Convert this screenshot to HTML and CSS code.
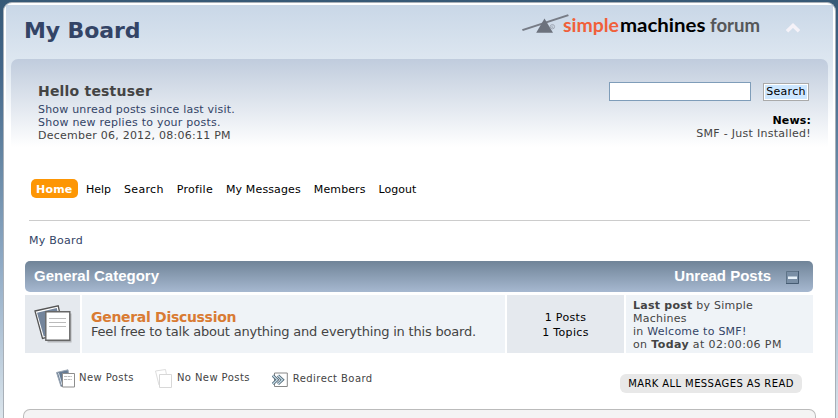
FILE: index.html
```html
<!DOCTYPE html>
<html lang="en">
<head>
<meta charset="utf-8">
<title>My Board</title>
<link rel="stylesheet" href="styles.css">
</head>
<body>
<div class="wrapper">
  <header class="top">
    <h1>My Board</h1>
    <svg class="logo" width="240" height="30" viewBox="522 10 240 30">
      <path d="M523 29.3 569 14.2l.8 1.8-46 15z" fill="#777c86"/>
      <path d="M545.5 18.5 554 32.8h-16.8z" fill="#6c727d"/>
      <circle cx="553.4" cy="26.7" r="2.2" fill="none" stroke="#98a0ac" stroke-width=".8"/>
      <path d="M554.3 26h-1.5v1.5h1.5" fill="none" stroke="#98a0ac" stroke-width=".6"/>
      <g class="logo-text">
        <text x="564" y="32" textLength="56" lengthAdjust="spacingAndGlyphs" fill="#f0603a">simple</text>
        <text x="621" y="32" textLength="85.5" lengthAdjust="spacingAndGlyphs" fill="#000">machines</text>
        <text x="711" y="32" textLength="50" lengthAdjust="spacingAndGlyphs" fill="#555759">forum</text>
      </g>
    </svg>
    <svg class="collapse" width="16" height="12" viewBox="0 0 16 12"><path d="M2 9.2 8 3.5l6 5.7" fill="none" stroke="#f5f2f8" stroke-width="3.6"/></svg>
  </header>
  <section class="upper">
    <div class="user">
      <h2>Hello testuser</h2>
      <a class="unread">Show unread posts since last visit.</a>
      <a class="replies">Show new replies to your posts.</a>
      <span class="date">December 06, 2012, 08:06:11 PM</span>
    </div>
    <div class="side">
      <div class="search"><input type="text" aria-label="Search"><button>Search</button></div>
      <b class="news">News:</b>
      <span class="newsline">SMF - Just Installed!</span>
    </div>
  </section>
  <nav>
    <a class="active">Home</a><a class="help">Help</a><a class="find">Search</a><a class="profile">Profile</a><a class="messages">My Messages</a><a class="members">Members</a><a>Logout</a>
  </nav>
  <div class="crumb">My Board</div>
  <main>
    <div class="cat"><h3>General Category</h3><h3 class="right">Unread Posts</h3>
      <svg width="13" height="13" viewBox="0 0 13 13"><path d="M0 0h13v13H0z" fill="#7a8fa6"/><path d="M.5 13V.5H13" fill="none" stroke="#5f7488"/><path d="M12.5 0v12.5H0" fill="none" stroke="#465c73"/><path d="M2 5.500h9v2.500h-9z" fill="#e8f2fa"/></svg>
    </div>
    <div class="board">
      <div class="icon">
        <svg width="38" height="38" viewBox="0 0 38 38">
          <path d="M1 6 24.2 .8 30 28 8.5 33.5z" fill="#fff" stroke="#555" stroke-width="1.3"/>
          <path d="M3 7.7 22.8 3l5 24-18 4.5z" fill="#73849b"/>
          <path d="M13.500 8.500h24v29h-24z" fill="#b5b7bb"/>
          <path d="M11.800 6.800h24v28.500h-24z" fill="#fff" stroke="#666" stroke-width="1.400"/>
          <path d="M15 13.500h17M15 17.500h17M15 21.500h17" stroke="#bbb"/>
        </svg>
      </div>
      <div class="info"><h4>General Discussion</h4><p>Feel free to talk about anything and everything in this board.</p></div>
      <div class="stats"><span>1 Posts</span><span>1 Topics</span></div>
      <div class="last"><span class="l1"><b>Last post</b> by Simple</span><span class="l2">Machines</span><span class="l3">in <a>Welcome to SMF!</a></span><span class="l4">on <b>Today</b> at 02:00:06 PM</span></div>
    </div>
    <div class="legend">
      <svg width="20" height="20" viewBox="0 0 20 20"><path d="M.5 3.500 12 .8 14 15l-9 2.500z" fill="#667b93" stroke="#9aa5b2"/><path d="M2.500 4 6 16" stroke="#d8dfe7"/><path d="M6.500 4.500h12v13.500h-12z" fill="#fff" stroke="#8d8d8d"/><path d="M8 7.500h8M8 10.500h8" stroke="#bbb" stroke-dasharray="3 .6"/></svg>
      <span class="new">New Posts</span>
      <svg width="20" height="20" viewBox="0 0 20 20"><path d="M1.500 2 11.500.5 14 14l-9 2z" fill="#fff" stroke="#ddd"/><path d="M5.500 5.500h12v13h-12z" fill="#fff" stroke="#d8d8d8"/></svg>
      <span class="none">No New Posts</span>
      <svg class="redir" width="17" height="16" viewBox="0 0 17 16"><path d="M2.500 1h12.800v13.500H2.500z" fill="#fff" stroke="#888"/><path d="m.8 3.500 4.500 4.300L.8 12M6 3.500l4.500 4.300L6 12" fill="none" stroke="#536977" stroke-width="3"/><path d="m.8 3.500 4.500 4.300L.8 12M6 3.500l4.500 4.300L6 12" fill="none" stroke="#c7dde9" stroke-width="1.200"/></svg>
      <span class="redirect">Redirect Board</span>
      <a class="mark">MARK ALL MESSAGES AS READ</a>
    </div>
    <div class="infocenter"></div>
  </main>
</div>
</body>
</html>
```
FILE: styles.css
```css
* { box-sizing: border-box; }
body {
  margin: 0;
  height: 418px;
  overflow: hidden;
  padding: 2px 2px 0 3px;
  background: linear-gradient(#375976 0, #43678a 70px, #6687a4 160px, #8ea9c4 260px, #dbe5ec 418px);
  font: 11px/13px "DejaVu Sans", sans-serif;
  color: #444;
}
h1, h2, h3, h4, p { margin: 0; }
.wrapper {
  height: 416px;
  overflow: hidden;
  border: 1px solid #a9b0b8;
  border-bottom: 0;
  border-radius: 9px 9px 0 0;
  padding: 2px 2px 0;
  background: linear-gradient(#c9d7e7 0, #dfe8f1 60px, #fff 120px) 2px 2px / calc(100% - 4px) 100% no-repeat #fff;
}
.top { height: 54px; display: flex; align-items: flex-start; padding: 5px 32px 0 18px; }
h1 { font-size: 22px; line-height: 41px; color: #334466; letter-spacing: -.1px; }
.logo { margin-left: auto; }
.logo-text { font: bold 18px "Lato", sans-serif; }
.collapse { margin: 12px 0 0 24px; }
.upper {
  height: 108px;
  margin: 0 5px;
  padding: 21px 17px 0 27px;
  border-radius: 7px 7px 0 0;
  background: linear-gradient(#c0ccdd, #e0e6ee 45px, #fff 88px);
  display: flex;
  justify-content: space-between;
}
.user { display: flex; flex-direction: column; }
h2 { font-size: 14px; line-height: 22px; margin-bottom: 1px; letter-spacing: .2px; }
.user a, .last a { color: #334466; }
.unread { letter-spacing: .2px; }
.replies, .date { letter-spacing: .24px; }
.side { display: flex; flex-direction: column; align-items: flex-end; }
.search { display: flex; align-items: center; gap: 12px; height: 23px; margin: 0 2px 11px 0; }
input { width: 142px; height: 19px; border: 1px solid #7f9db9; background: #fff; padding: 0; }
button { width: 46px; height: 18px; border: 1px solid #aaa; outline: 1px solid #fff; outline-offset: -2px; background: #cde7ff; padding: 0; font: 11px "DejaVu Sans", sans-serif; letter-spacing: .3px; }
.news { color: #000; letter-spacing: .15px; }
.newsline { letter-spacing: .28px; }
nav { height: 54px; margin: 0 23px; border-bottom: 1px solid #ccc; display: flex; align-items: flex-start; padding: 12px 0 0 2px; color: #000; }
nav a { line-height: 19px; padding-top: 1px; height: 19px; margin-right: 13px; }
nav .active { width: 47px; padding-left: 5px; margin-right: 8px; color: #fff; background: #fd9604; border-radius: 5px; font-weight: bold; letter-spacing: .2px; }
.find, .profile { letter-spacing: .3px; }
.messages { letter-spacing: .13px; }
.members { letter-spacing: .1px; }
.crumb { margin: 13px 0 14px 23px; color: #334466; letter-spacing: .26px; }
main { margin: 0 20px 0 19px; }
.cat { height: 31px; padding: 0 14px 0 9px; display: flex; align-items: center; color: #fff; border-radius: 5px; background: linear-gradient(#708498, #a6b8d0); }
h3 { font: bold 15px "Liberation Sans", sans-serif; margin-bottom: 2px; }
.right { margin-left: auto; }
.cat svg { margin: 2px 0 0 15px; }
.board { margin-top: 3px; height: 58px; display: grid; grid-template-columns: 55px 423px 117px 187px; gap: 2px; }
.icon, .stats { background: #e5e9ee; }
.info, .last { background: #eff3f7; }
.icon { padding: 10px 0 0 9px; }
.icon svg { display: block; }
.info { padding: 15px 0 0 9px; font-size: 13px; line-height: 14px; letter-spacing: -.2px; }
h4 { font-size: 14px; line-height: 15px; color: #d97b33; letter-spacing: -.3px; }
.stats { display: flex; flex-direction: column; align-items: center; padding: 15px 0 0; line-height: 15px; color: #000; letter-spacing: .35px; }
.last { padding: 4px 0 0 7px; display: flex; flex-direction: column; letter-spacing: .25px; }
.l4 { letter-spacing: .38px; }
.last span, .user a, .user span, nav a { white-space: nowrap; align-self: flex-start; }
.legend { height: 55px; padding: 16px 11px 0 31px; display: flex; align-items: flex-start; font-size: 10px; letter-spacing: .42px; white-space: nowrap; }
.legend svg { flex: none; }
.legend span { line-height: 18px; }
.new { margin: 0 20px 0 3px; }
.none { margin: 0 22px 0 3px; }
.redir { margin-top: 3px; }
.redirect { margin: 1px 0 0 4px; }
.mark { margin: 5px 0 0 auto; width: 182px; line-height: 19px; text-align: center; color: #000; background: #e8e8e8; border-radius: 6px; letter-spacing: .4px; }
.infocenter { height: 10px; margin: 1px -3px 0 -2px; border: 1px solid #bbb; border-bottom: 0; border-radius: 7px 7px 0 0; background: #f4f4f4; }
```
